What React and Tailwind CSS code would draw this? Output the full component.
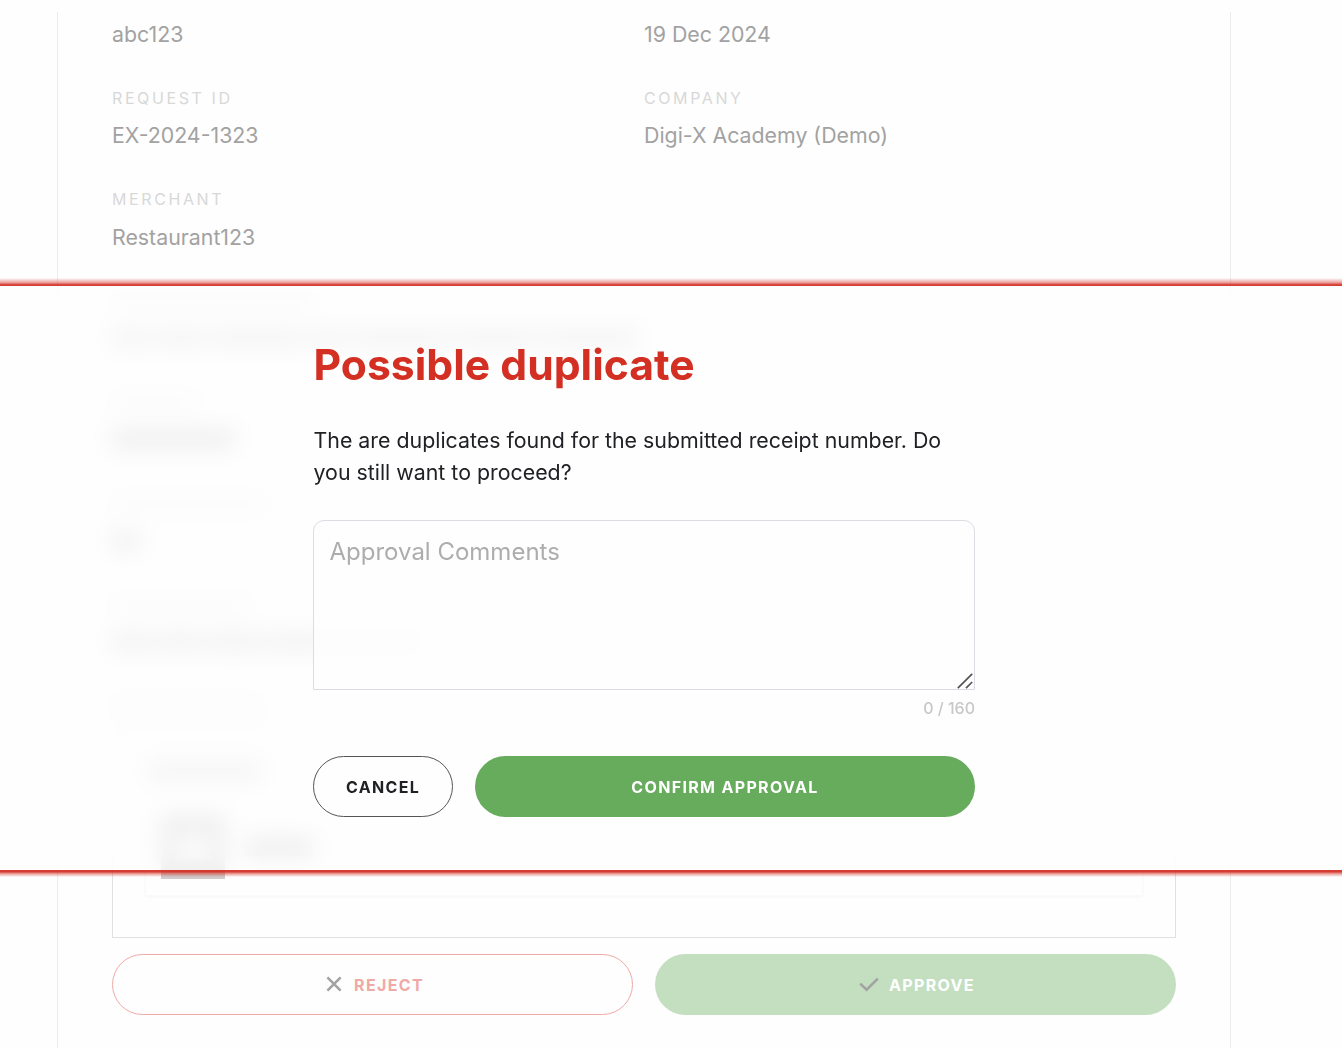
import { useState } from 'react';

const MAX_COMMENT = 160;

function Field({ label, value }) {
  return (
    <div className="h-16">
      <p className="pt-[0.5px] text-[16px] leading-[21.33px] tracking-[2.6px] text-[#d8d8d8] uppercase">{label}</p>
      <p className="mt-[10.17px] text-[21.33px] leading-8 text-[#a2a2a2]">{value}</p>
    </div>
  );
}

// Row that only ever shows up behind the dialog's frosted backdrop
function HiddenField({ labelClass, valueClass, words }) {
  return (
    <div className="h-16">
      <div className={`mt-[3px] h-4 bg-[#f5f5f5] ${labelClass}`} />
      <div className="mt-5 flex gap-[5px]">
        {words.map((word, i) => (
          <div key={i} className={`h-[18px] ${word} ${valueClass}`} />
        ))}
      </div>
    </div>
  );
}

function CrossIcon() {
  return (
    <svg className="h-4 w-4" viewBox="0 0 16 16" fill="none" stroke="#a3a3a3" strokeWidth="2.6">
      <path d="M1.4 1.4 14.6 14.6M14.6 1.4 1.4 14.6" />
    </svg>
  );
}

function CheckIcon() {
  return (
    <svg className="h-[15px] w-5" viewBox="0 0 20 15" fill="none" stroke="#a3a3a3" strokeWidth="2.6">
      <path d="M1.2 6.6 7.6 12.6 18.8 1.6" />
    </svg>
  );
}

function Attachments() {
  return (
    <div className="mt-[17px] h-[208px] border border-[#dfe0e4] px-8 pt-2">
      <div className="h-[157px] border border-[#fafafa] px-[15px] pt-[23px] shadow-[0_1px_3px_rgba(0,0,0,0.03)]">
        <div className="-ml-3 h-4 w-[112px] bg-[#dcdcdc]" />
        <div className="mt-9 flex items-center gap-5">
          <div className="h-16 w-16 bg-[#cfcbca] py-5">
            <div className="mx-auto h-6 w-9 bg-[#fafafa]" />
          </div>
          <div className="h-[18px] w-[68px] bg-[#c8c8c8]" />
        </div>
      </div>
    </div>
  );
}

function DuplicateDialog() {
  const [comment, setComment] = useState('');

  return (
    <div role="dialog" className="absolute inset-x-0 top-[278px]">
      <div className="h-[7.67px] bg-linear-to-b from-[#d43328]/0 via-[#d43328]/45 via-55% to-[#d43328]/95 to-85%" />
      <div className="h-[584.33px] bg-[#fefefe]/70 pt-[52.33px] pl-[313px] backdrop-blur-[11px]">
        <div className="w-[662px]">
          <h2 className="pl-[0.5px] text-[42.67px] leading-[53px] font-bold text-[#d32f23]">Possible duplicate</h2>
          <p className="mt-[33.4px] pl-[0.5px] text-[21.33px] leading-8 tracking-[0.01px] text-[#202124]">
            The are duplicates found for the submitted receipt number. Do you still want to proceed?
          </p>
          <div className="relative mt-[31.6px] h-[170px]">
            <textarea
              className="h-[170px] w-full resize-none rounded-t-[11px] border border-[#dcdce3] bg-[#fefefe]/75 px-[15.5px] py-[15px] text-[24px] leading-8 text-[#202124] outline-none placeholder:text-[#adadad]"
              placeholder="Approval Comments"
              maxLength={MAX_COMMENT}
              value={comment}
              onChange={(e) => setComment(e.target.value)}
            />
            <svg className="absolute right-[2px] bottom-[1px] h-4 w-4" viewBox="0 0 16 16" stroke="#555" strokeWidth="1.7">
              <path d="M0.8 15.2 15.2 0.8M9 15.2 15.2 9" />
            </svg>
          </div>
          <p className="mt-2 text-right text-[16px] leading-[21px] font-medium text-[#c8c8c8]">
            {comment.length} / {MAX_COMMENT}
          </p>
          <div className="mt-[37px] flex gap-[22px]">
            <button className="h-[61px] w-[140px] rounded-full border border-[#555] bg-[#fefefe] pt-0.5 text-[16px] font-bold tracking-[1.33px] text-[#202124]">
              CANCEL
            </button>
            <button className="h-[61px] flex-1 rounded-full bg-[#66ac5c] pt-0.5 text-[16px] font-bold tracking-[1.33px] text-white">
              CONFIRM APPROVAL
            </button>
          </div>
        </div>
      </div>
      <div className="h-[7px] bg-linear-to-b from-[#d43328]/95 from-25% via-[#d43328]/45 via-55% to-[#d43328]/0" />
    </div>
  );
}

export default function App() {
  return (
    <div className="relative h-[1048px] w-[1342px] overflow-hidden bg-[#fefefe] pt-3 font-['Inter',sans-serif]">
      <main className="ml-[57px] h-[1036px] w-[1174px] border-x border-[#ececec] px-[54px] pt-[6px]">
        <div className="grid grid-cols-2 text-[21.33px] leading-8 text-[#a2a2a2]">
          <p>abc123</p>
          <p>19 Dec 2024</p>
        </div>
        <div className="mt-[37.33px] grid grid-cols-2 gap-y-[37.33px]">
          <Field label="Request ID" value="EX-2024-1323" />
          <Field label="Company" value="Digi-X Academy (Demo)" />
          <Field label="Merchant" value="Restaurant123" />
        </div>
        <div className="mt-[37.33px] grid gap-y-[37.33px]">
          <HiddenField
            labelClass="w-[205px]"
            valueClass="bg-[#dfdfdf]"
            words={['w-[40px]', 'w-[50px]', 'w-[92px]', 'w-[38px]', 'w-[98px]', 'w-[82px]', 'w-[96px]']}
          />
          <HiddenField labelClass="w-[86px]" valueClass="bg-[#cacaca]" words={['w-[122px]']} />
          <HiddenField labelClass="w-[154px]" valueClass="bg-[#cecece]" words={['w-[28px]']} />
          <HiddenField
            labelClass="w-[138px]"
            valueClass="bg-[#d8d8d8]"
            words={['w-[42px]', 'w-[42px]', 'w-[56px]', 'w-[62px]', 'w-[86px]']}
          />
        </div>
        <div className="mt-[39px] h-4 w-[150px] bg-[#f6f6f6]" />
        <Attachments />
        <div className="mt-4 flex gap-[22px]">
          <button className="flex h-[61px] w-[521px] items-center justify-center gap-3 rounded-full border border-[#f0aaa6] pl-[5px] text-[16px] font-bold tracking-[1.33px] text-[#f0aaa6]">
            <CrossIcon />
            <span className="pt-px">REJECT</span>
          </button>
          <button className="flex h-[61px] w-[521px] items-center justify-center gap-[10px] rounded-full bg-[#c3dfbf] pl-[3px] text-[16px] font-bold tracking-[1.33px] text-white">
            <CheckIcon />
            <span className="pt-px">APPROVE</span>
          </button>
        </div>
      </main>
      <DuplicateDialog />
    </div>
  );
}
